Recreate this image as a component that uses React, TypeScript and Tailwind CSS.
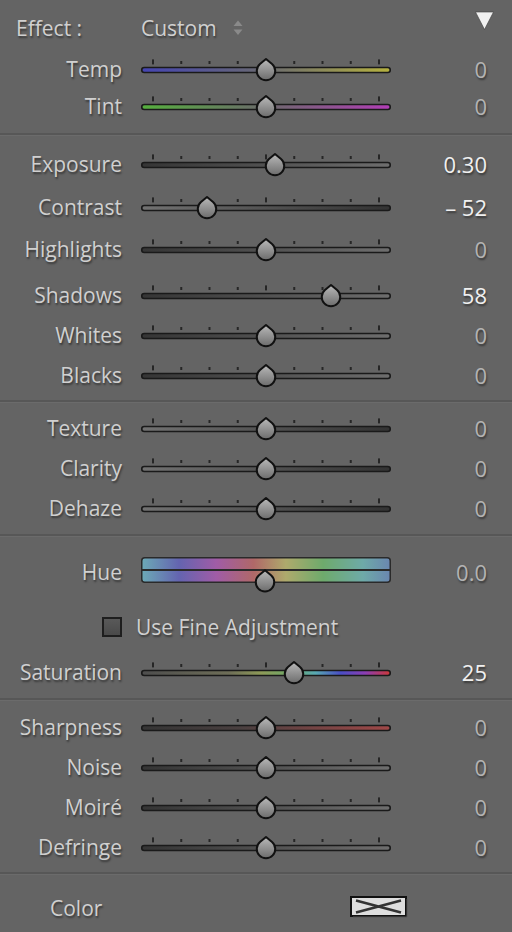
import React, { useId } from 'react';

type Stop = [number, string];

const DARK_LIGHT: Stop[] = [[0, '#353535'], [1, '#6e6e6e']];
const LIGHT_DARK: Stop[] = [[0, '#727272'], [1, '#333333']];

const FILLS: Record<string, Stop[]> = {
  temp: [[0, '#4545b2'], [0.5, '#6a6a70'], [1, '#b6b240']],
  tint: [[0, '#56b03e'], [0.5, '#6c6a6c'], [1, '#b23eb6']],
  dl: DARK_LIGHT,
  ld: LIGHT_DARK,
  sharp: [[0, '#353535'], [0.4, '#4a4040'], [1, '#a04848']],
  sat: [
    [0, '#4e4e4e'],
    [0.35, '#6e6e58'],
    [0.48, '#8e9a58'],
    [0.6, '#6eaa68'],
    [0.7, '#58a8b2'],
    [0.8, '#4a4ec4'],
    [0.9, '#8c3eb2'],
    [1, '#cc3838'],
  ],
};

const HUE: Stop[] = [
  [0, '#6caab6'],
  [0.15, '#6464b0'],
  [0.3, '#a05ca6'],
  [0.45, '#b06868'],
  [0.58, '#aeaa6c'],
  [0.73, '#6eaa6c'],
  [0.89, '#6eaaa8'],
  [1, '#6a86b0'],
];

const TICKS = [0, 1, 2, 3, 4, 5, 6, 7, 8];

const shadow = '[text-shadow:1px_2px_2px_rgba(0,0,0,0.45)]';
const labelCls = `w-[122px] shrink-0 -translate-y-px text-right text-[21px] leading-[28px] text-[#d0d0d0] ${shadow}`;

function Thumb({ cx, cy, grad }: { cx: number; cy: number; grad: string }) {
  return (
    <path
      transform={`translate(${cx} ${cy}) scale(1.06)`}
      d="M0,-10.4 L5.71,-5.57 A8.7 8.7 0 1 1 -5.71,-5.57 Z"
      fill={`url(#${grad})`}
      stroke="#111111"
      strokeWidth={1.9}
      strokeLinejoin="round"
    />
  );
}

function ThumbGrad({ id }: { id: string }) {
  return (
    <linearGradient id={id} x1="0" x2="0" y1="0" y2="1">
      <stop offset="0" stopColor="#b9b9b9" />
      <stop offset="1" stopColor="#6c6c6c" />
    </linearGradient>
  );
}

function Slider({ pos, fill }: { pos: number; fill: Stop[] }) {
  const uid = useId().replace(/[^a-zA-Z0-9]/g, '');
  const cx = 5 + 250 * pos;
  return (
    <svg width="260" height="40" viewBox="0 0 260 40" className="shrink-0 overflow-visible">
      <defs>
        <linearGradient id={`t${uid}`} x1="0" x2="1" y1="0" y2="0">
          {fill.map(([o, c]) => (
            <stop key={o} offset={o} stopColor={c} />
          ))}
        </linearGradient>
        <ThumbGrad id={`k${uid}`} />
      </defs>
      {TICKS.map((i) => {
        const x = 17 + 28.25 * i;
        const tall = i % 4 === 0;
        return (
          <rect
            key={i}
            x={x - 1}
            y={tall ? 9.4 : 11}
            width={2}
            height={tall ? 5 : 3}
            fill="#262626"
          />
        );
      })}
      <rect
        x="5.75"
        y="17.5"
        width="248.5"
        height="5"
        rx="2.5"
        fill={`url(#t${uid})`}
        stroke="#1a1a1a"
        strokeWidth="1.6"
      />
      <Thumb cx={cx} cy={20} grad={`k${uid}`} />
    </svg>
  );
}

function Value({ value, bright }: { value: string; bright?: boolean }) {
  return (
    <div
      className={`flex-1 -translate-y-px pr-[25px] text-right text-[22px] leading-[28px] ${shadow} ${
        bright ? 'text-[#f0f0f0]' : 'text-[#b3b3b3]'
      }`}
    >
      {value}
    </div>
  );
}

type RowDef = { label: string; value: string; bright?: boolean; pos: number; fill: string; mt: string };

function Row({ row }: { row: RowDef }) {
  return (
    <div className={`flex h-[36px] items-center ${row.mt}`}>
      <div className={labelCls}>{row.label}</div>
      <div className="ml-[14px] flex">
        <Slider pos={row.pos} fill={FILLS[row.fill]} />
      </div>
      <Value value={row.value} bright={row.bright} />
    </div>
  );
}

function Divider({ h }: { h: string }) {
  return (
    <div className={`flex flex-col justify-center ${h}`}>
      <div className="h-[2px] bg-[#575757]" />
      <div className="h-px bg-[#6b6b6b]" />
    </div>
  );
}

const GROUP1: RowDef[] = [
  { label: 'Temp', value: '0', pos: 0.5, fill: 'temp', mt: 'mt-[2px]' },
  { label: 'Tint', value: '0', pos: 0.5, fill: 'tint', mt: 'mt-[1px]' },
];

const GROUP2: RowDef[] = [
  { label: 'Exposure', value: '0.30', bright: true, pos: 0.536, fill: 'dl', mt: 'mt-[4px]' },
  { label: 'Contrast', value: '– 52', bright: true, pos: 0.264, fill: 'ld', mt: 'mt-[7px]' },
  { label: 'Highlights', value: '0', pos: 0.5, fill: 'dl', mt: 'mt-[6px]' },
  { label: 'Shadows', value: '58', bright: true, pos: 0.76, fill: 'dl', mt: 'mt-[10px]' },
  { label: 'Whites', value: '0', pos: 0.5, fill: 'dl', mt: 'mt-[4px]' },
  { label: 'Blacks', value: '0', pos: 0.5, fill: 'dl', mt: 'mt-[4px]' },
];

const GROUP3: RowDef[] = [
  { label: 'Texture', value: '0', pos: 0.5, fill: 'ld', mt: 'mt-[3px]' },
  { label: 'Clarity', value: '0', pos: 0.5, fill: 'ld', mt: 'mt-[4px]' },
  { label: 'Dehaze', value: '0', pos: 0.5, fill: 'ld', mt: 'mt-[4px]' },
];

const GROUP5: RowDef[] = [
  { label: 'Sharpness', value: '0', pos: 0.5, fill: 'sharp', mt: 'mt-[3px]' },
  { label: 'Noise', value: '0', pos: 0.5, fill: 'dl', mt: 'mt-[4px]' },
  { label: 'Moiré', value: '0', pos: 0.5, fill: 'dl', mt: 'mt-[4px]' },
  { label: 'Defringe', value: '0', pos: 0.5, fill: 'dl', mt: 'mt-[4px]' },
];

function HueBar() {
  const uid = useId().replace(/[^a-zA-Z0-9]/g, '');
  return (
    <svg width="260" height="56" viewBox="0 0 260 56" className="shrink-0 overflow-visible">
      <defs>
        <linearGradient id={`h${uid}`} x1="0" x2="1" y1="0" y2="0">
          {HUE.map(([o, c]) => (
            <stop key={o} offset={o} stopColor={c} />
          ))}
        </linearGradient>
        <ThumbGrad id={`k${uid}`} />
      </defs>
      <rect
        x="5.75"
        y="14.75"
        width="248.5"
        height="24.5"
        rx="3"
        fill={`url(#h${uid})`}
        stroke="#2a2a2a"
        strokeWidth="1.5"
      />
      <line x1="6" x2="254" y1="27" y2="27" stroke="#2a2a2a" strokeWidth="2" />
      <Thumb cx={129} cy={38.2} grad={`k${uid}`} />
    </svg>
  );
}

export default function App() {
  return (
    <div className="h-[932px] w-[512px] overflow-hidden bg-[#646464] font-['Open_Sans',sans-serif] select-none">
      {/* header */}
      <div className="flex h-[50px] items-center pt-[6px]">
        <div className={`ml-[16px] w-[125px] text-[21px] leading-[28px] text-[#d0d0d0] ${shadow}`}>
          Effect :
        </div>
        <div className={`text-[21px] leading-[28px] text-[#d0d0d0] ${shadow}`}>Custom</div>
        <svg width="10" height="16" viewBox="0 0 10 16" className="ml-[16px]">
          <path d="M5,0.5 L9.5,6 L0.5,6 Z" fill="#8a8a8a" />
          <path d="M0.5,9.5 L9.5,9.5 L5,15 Z" fill="#8a8a8a" />
        </svg>
        <div className="flex-1" />
        <svg width="19" height="19" viewBox="0 0 19 19" className="mr-[18px] -mt-[16px]">
          <path d="M0.5,1 L18.5,1 L9.5,18.5 Z" fill="#f0f0f0" stroke="#3a3a3a" strokeWidth="0.6" />
        </svg>
      </div>

      {GROUP1.map((r) => (
        <Row key={r.label} row={r} />
      ))}
      <Divider h="h-[18px]" />
      {GROUP2.map((r) => (
        <Row key={r.label} row={r} />
      ))}
      <Divider h="h-[14px]" />
      {GROUP3.map((r) => (
        <Row key={r.label} row={r} />
      ))}
      <Divider h="h-[16px]" />

      {/* hue */}
      <div className="flex h-[56px] items-center">
        <div className={`${labelCls} mt-[3px]`}>Hue</div>
        <div className="ml-[14px] flex">
          <HueBar />
        </div>
        <div className="mt-[3px] flex-1">
          <Value value="0.0" />
        </div>
      </div>

      {/* fine adjustment */}
      <div className="flex h-[56px] items-center pl-[102px]">
        <div className="h-[20px] w-[20px] border-2 border-[#1e1e1e] bg-gradient-to-b from-[#595959] to-[#4a4a4a]" />
        <div className={`ml-[14px] text-[21px] leading-[28px] text-[#d0d0d0] ${shadow}`}>
          Use Fine Adjustment
        </div>
      </div>

      <Row row={{ label: 'Saturation', value: '25', bright: true, pos: 0.612, fill: 'sat', mt: 'mt-0' }} />
      <Divider h="h-[16px]" />
      {GROUP5.map((r) => (
        <Row key={r.label} row={r} />
      ))}
      <Divider h="h-[14px]" />

      {/* color */}
      <div className="flex h-[56px] items-center">
        <div className={`ml-[50px] w-[300px] text-[21px] leading-[28px] text-[#d0d0d0] ${shadow}`}>
          Color
        </div>
        <svg width="58" height="22" viewBox="0 0 58 22" className="-mt-[3px]">
          <rect x="1" y="1" width="55" height="19" fill="#dedede" stroke="#111111" strokeWidth="2" />
          <path d="M6,4.5 L51,16.5 M6,16.5 L51,4.5" stroke="#333333" strokeWidth="2.6" />
          <path d="M57,3 L57,21 L3,21" fill="none" stroke="#555555" strokeWidth="1" />
        </svg>
      </div>
    </div>
  );
}
